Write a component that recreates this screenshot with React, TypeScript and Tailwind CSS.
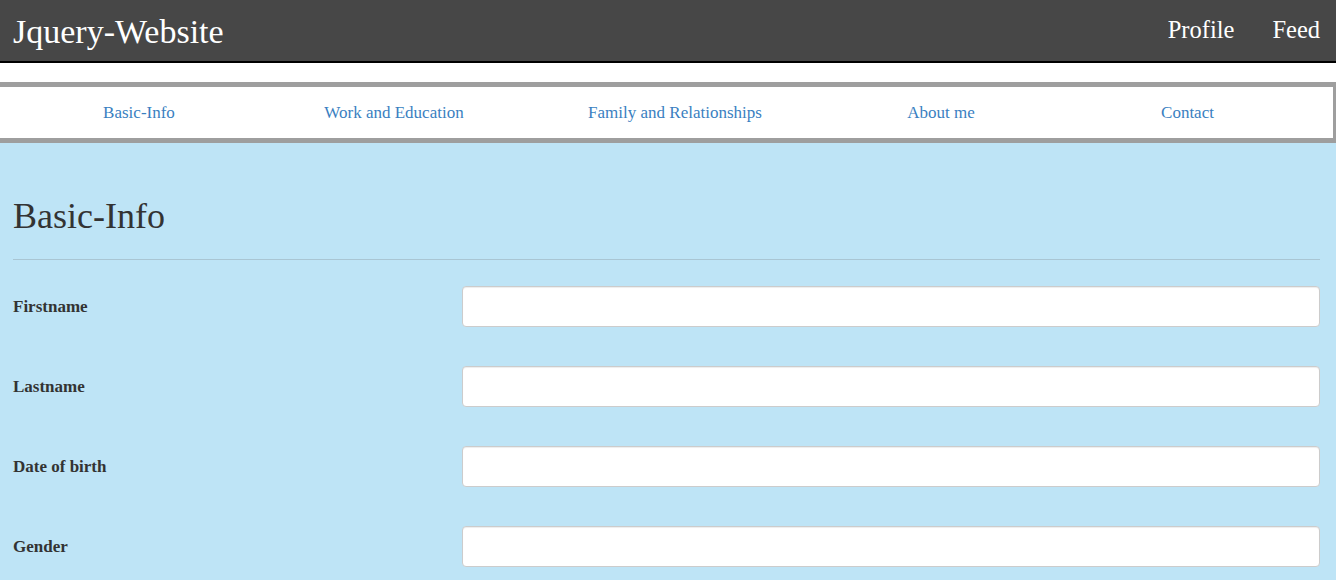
import React from "react";

const navItems = [
    { label: "Basic-Info", width: "w-[278px]" },
    { label: "Work and Education", width: "w-[232px]" },
    { label: "Family and Relationships", width: "w-[330px]" },
    { label: "About me", width: "w-[202px]" },
    { label: "Contact", width: "flex-1" },
];

const fields = ["Firstname", "Lastname", "Date of birth", "Gender"];

export default function App() {
    return (
        <div className="min-h-screen bg-[#bee4f6] font-['Liberation_Serif',serif] text-[#333]">
            {/* header */}
            <header className="h-[63px] bg-[#474747] border-b-2 border-black flex items-center justify-between pl-[13px] pr-[16px]">
                <h1 className="text-[34px] text-white leading-none pt-[2px]">Jquery-Website</h1>
                <nav className="flex gap-[38px] text-[24.5px] text-white leading-none pb-[1px]">
                    <a href="#">Profile</a>
                    <a href="#">Feed</a>
                </nav>
            </header>

            {/* tabs */}
            <div className="bg-white pt-[19px]">
                <ul className="flex h-[61px] bg-white border-y-[5px] border-r-[3px] border-[#9e9e9e]">
                    {navItems.map((item) => (
                        <li key={item.label} className={`${item.width} flex items-center justify-center`}>
                            <a href="#" className="text-[17px] text-[#3a7fc1]">{item.label}</a>
                        </li>
                    ))}
                </ul>
            </div>

            {/* form */}
            <section className="pl-[13px] pr-[16px] pt-[51px]">
                <h2 className="text-[36px] leading-[44px]">Basic-Info</h2>
                <hr className="mt-[21px] border-t border-[#a9c5d3]" />
                <form className="pt-[26px] flex flex-col gap-[39px]">
                    {fields.map((f) => (
                        <div key={f} className="grid grid-cols-[449px_1fr] items-center">
                            <label className="text-[17px] font-bold">{f}</label>
                            <input
                                type="text"
                                className="h-[41px] bg-white border border-[#ccc] rounded-[4px] shadow-[inset_0_1px_1px_rgba(0,0,0,0.075)] px-3 outline-none"
                            />
                        </div>
                    ))}
                </form>
            </section>
        </div>
    );
}
